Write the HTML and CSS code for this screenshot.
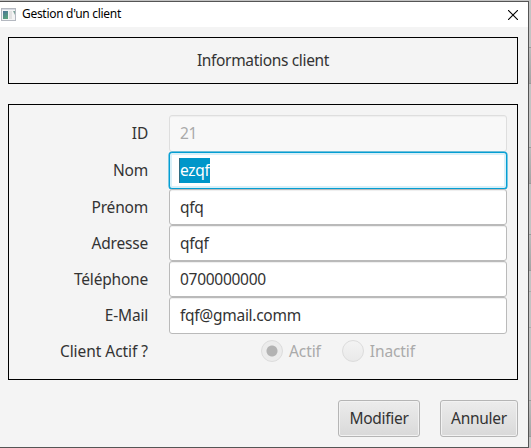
FILE: index.html
```html
<!DOCTYPE html>
<html lang="fr">
<head>
<meta charset="utf-8">
<title>Gestion d'un client</title>
<link rel="stylesheet" href="styles.css">
</head>
<body>
<div class="window">
  <header class="titlebar">
    <svg class="app-icon" width="15" height="13" viewBox="0 0 15 13">
      <defs><linearGradient id="g" x1="0" y1="0" x2="0.4" y2="1"><stop offset="0" stop-color="#4b7396"/><stop offset="1" stop-color="#58a07c"/></linearGradient></defs>
      <rect x=".5" y=".5" width="14" height="12" fill="#f4f4f4" stroke="#b4b8c0"/>
      <rect x="1" y="1" width="13" height="1" fill="#d6dae2"/>
      <rect x="2" y="3" width="5" height="8" fill="url(#g)"/>
      <rect x="8" y="3" width="3" height="8" fill="#e2e2e2"/>
      <path d="M12 3h2v4z" fill="#7fa59b"/>
    </svg>
    <span class="title">Gestion d'un client</span>
    <svg class="close" width="10" height="10" viewBox="0 0 10 10"><path d="M0 0L10 10M10 0L0 10" stroke="#000" stroke-width="1.1"/></svg>
  </header>
  <main class="content">
    <section class="panel heading"><span>Informations client</span></section>
    <section class="panel form">
      <label class="raised">ID</label><div class="field raised disabled">21</div>
      <label class="raised">Nom</label><div class="field focused"><span class="selection">ezqf</span></div>
      <label>Prénom</label><div class="field">qfq</div>
      <label>Adresse</label><div class="field">qfqf</div>
      <label>Téléphone</label><div class="field">0700000000</div>
      <label>E-Mail</label><div class="field last">fqf@gmail.comm</div>
      <label class="wide">Client Actif ?</label>
      <div class="radios">
        <span class="radio"><i class="dot on"></i>Actif</span>
        <span class="radio"><i class="dot"></i>Inactif</span>
      </div>
    </section>
    <footer class="actions">
      <button class="modify">Modifier</button>
      <button class="cancel">Annuler</button>
    </footer>
  </main>
</div>
</body>
</html>
```
FILE: styles.css
```css
* { box-sizing: border-box; }
body {
  margin: 0;
  width: 531px;
  height: 448px;
  overflow: hidden;
  padding-top: 1px;
  background:
    linear-gradient(#999, #999) 0 47px / 100% 1px no-repeat,
    linear-gradient(#999, #999) 0 83px / 100% 1px no-repeat,
    linear-gradient(#999, #999) 0 147px / 100% 1px no-repeat,
    linear-gradient(#999, #999) 0 183px / 100% 1px no-repeat,
    linear-gradient(#999, #999) 0 234px / 100% 1px no-repeat,
    linear-gradient(#999, #999) 0 270px / 100% 1px no-repeat,
    linear-gradient(#aaa, #aaa) 0 291px / 100% 1px no-repeat,
    linear-gradient(#aaa, #aaa) 0 327px / 100% 1px no-repeat,
    linear-gradient(#999, #999) 0 400px / 100% 1px no-repeat,
    linear-gradient(#999, #999) 0 436px / 100% 1px no-repeat,
    linear-gradient(#bdbdbd, #a4a4a4) 0 47px / 100% 36px no-repeat,
    linear-gradient(#bdbdbd, #a4a4a4) 0 147px / 100% 36px no-repeat,
    linear-gradient(#bdbdbd, #a4a4a4) 0 234px / 100% 36px no-repeat,
    linear-gradient(#bdbdbd, #a4a4a4) 0 400px / 100% 36px no-repeat,
    #c3c3c3;
  font: 15.5px/20px "Noto Sans", "Open Sans", sans-serif;
  letter-spacing: -0.28px;
  color: #333;
}
.window {
  width: 529px;
  height: 447px;
  border: solid #555;
  border-width: 1px 1px 1px 0;
  background: #f4f4f4;
}
.titlebar {
  display: flex;
  align-items: center;
  height: 25px;
  padding: 0 10px 0 1px;
  background: #fff;
  color: #000;
  font-size: 12px;
}
.title { margin: -1px 0 0 6px; letter-spacing: -0.3px; }
.close { margin-left: auto; }
.content { padding: 10px 10px 0 8px; }
.panel { border: 1px solid #000; }
.heading {
  height: 47px;
  padding-bottom: 2px;
  display: flex;
  align-items: center;
  justify-content: center;
  letter-spacing: -0.33px;
}
.form {
  margin-top: 20px;
  height: 276px;
  padding: 10px 10px 0 9px;
  display: grid;
  grid-template-columns: 130px 338px;
  column-gap: 21px;
  grid-template-rows: 37px 37px repeat(5, 36px);
  align-items: center;
}
.form label { text-align: right; white-space: nowrap; letter-spacing: -0.2px; }
.form .wide { letter-spacing: -0.05px; }
.raised { padding-bottom: 2px; }
.field {
  height: 100%;
  display: flex;
  align-items: center;
  padding-left: 10px;
  border: 1px solid #bababa;
  border-radius: 3px;
  background: #fff;
  box-shadow: inset 0 2px 1px -1px #eee;
}
.field.last { height: 37px; }
.field.disabled { border-color: #dedede; background: #f8f8f8; color: #aaa; }
.field.focused {
  border-color: #039ed3;
  box-shadow: 0 0 0 .5px #039ed3, inset 0 0 0 2px #d9f0f8;
}
.selection {
  background: #0096c9;
  color: #fff;
  line-height: 25px;
  border-left: 1px solid #336c80;
  margin-left: -1px;
}
.radios { display: flex; gap: 21px; padding-left: 92px; color: #aaa; letter-spacing: -0.1px; }
.radio { display: flex; align-items: center; gap: 6px; }
.dot {
  width: 22px;
  height: 22px;
  border: 1px solid #dcdcdc;
  border-radius: 50%;
  background: linear-gradient(#f3f3f3, #e9e9e9);
}
.dot.on { background: radial-gradient(circle, #b3b3b3 5px, #ececec 6px); }
.actions { display: flex; justify-content: flex-end; gap: 20px; margin-top: 20px; }
button {
  height: 37px;
  padding: 0 0 1px;
  border: 1px solid #b5b5b5;
  border-radius: 3px;
  background: linear-gradient(#ececec, #d9d9d9);
  box-shadow: inset 0 0 0 1px #f2f2f2;
  color: #333;
  font: inherit;
  letter-spacing: inherit;
}
.modify { width: 82px; }
.cancel { width: 78px; }
```
